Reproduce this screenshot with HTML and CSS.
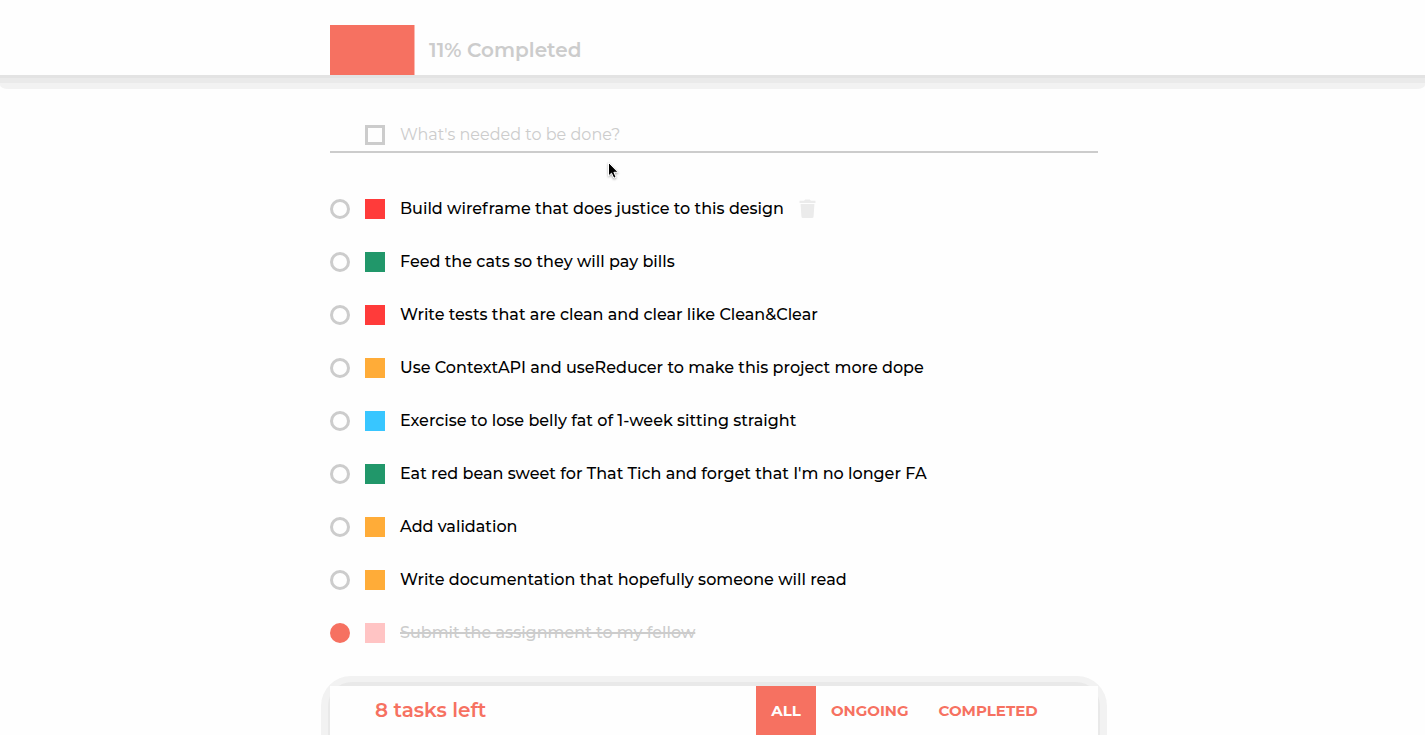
FILE: index.html
```html
<!DOCTYPE html>
<html lang="en">
<head>
<meta charset="utf-8">
<title>Todo</title>
<link rel="stylesheet" href="styles.css">
</head>
<body>
<header class="header">
  <div class="progress"><div class="progress-bar"></div><span class="progress-label">11% Completed</span></div>
</header>
<main class="main">
  <div class="new-task"><span class="priority empty"></span><span class="placeholder">What's needed to be done?</span></div>
  <ul class="tasks">
    <li class="task"><span class="check"></span><span class="priority red"></span><span class="text">Build wire<span class="loose">f</span>rame that does justice to this design</span><svg class="trash" width="18" height="20" viewBox="0 0 18 20"><path fill="#ebebeb" d="M.5 1.800H5L6.300.5h4.400L12 1.800h4.500V4H.5zM1.600 5h13.800l-.8 12.500q-.1 1.500-1.600 1.500H4q-1.500 0-1.600-1.500z"/></svg></li>
    <li class="task"><span class="check"></span><span class="priority green"></span><span class="text">Feed the cats so they will pay bills</span></li>
    <li class="task"><span class="check"></span><span class="priority red"></span><span class="text">Write tests that are clean and clear like Clean&amp;Clear</span></li>
    <li class="task"><span class="check"></span><span class="priority orange"></span><span class="text">Use ContextAPI and useReducer to make this project more dope</span></li>
    <li class="task"><span class="check"></span><span class="priority blue"></span><span class="text">Exercise to lose belly fat of 1-week sitting straight</span></li>
    <li class="task"><span class="check"></span><span class="priority green"></span><span class="text">Eat red bean sweet for That Tich and forget that I'm no longer FA</span></li>
    <li class="task"><span class="check"></span><span class="priority orange"></span><span class="text">Add validation</span></li>
    <li class="task"><span class="check"></span><span class="priority orange"></span><span class="text">Write documentation that hopefully someone will read</span></li>
    <li class="task done"><span class="check"></span><span class="priority pink"></span><span class="text">Submit the assignment to my fellow</span></li>
  </ul>
</main>
<footer class="footer">
  <div class="footer-inner">
    <span class="left">8 tasks left</span>
    <nav class="filters"><a class="filter active">ALL</a><a class="filter">ONGOING</a><a class="filter">COMPLETED</a></nav>
  </div>
</footer>
<svg class="cursor" width="14" height="20" viewBox="0 0 14 20"><path fill="#000" stroke="#fff" stroke-width="1" d="M1.500 1.500V15l3-2.800 2.300 5 2.300-1-2.200-4.900h4.200z"/></svg>
</body>
</html>
```
FILE: styles.css
```css
* { box-sizing: border-box; }
html { overflow: hidden; }
body {
  margin: 0;
  height: 735px;
  overflow: hidden;
  background: #fefefe;
  color: #000;
  font-family: Montserrat, Inter, sans-serif;
  font-size: 16px;
  display: flex;
  flex-direction: column;
}
.header { position: relative; z-index: 0; height: 75px; padding: 25px 0 0 330px; background: #fefefe; }
.header::after {
  content: "";
  position: absolute;
  z-index: -1;
  inset: 0;
  background: #fefefe;
  box-shadow: 0 3px #e3e3e3;
}
.header::before {
  content: "";
  position: absolute;
  z-index: -2;
  left: 0; right: 0; top: 75px;
  height: 14px;
  border-radius: 0 0 8px 8px / 0 0 4px 4px;
  background: linear-gradient(#eaeaea 8px, #f2f2f2 8px);
}
.progress { display: flex; align-items: center; height: 50px; }
.progress-bar { width: 85px; height: 50px; background: linear-gradient(90deg, #f67161 84px, #fbb8b0 84px); }
.progress-label { margin-left: 14px; font-size: 20px; font-weight: 600; letter-spacing: .03px; color: #ccc; white-space: nowrap; }
.main { flex: 1; width: 768px; margin-left: 330px; padding-top: 42px; }
.new-task { display: flex; align-items: center; height: 36px; border-bottom: 2px solid #ccc; padding-left: 35px; }
.placeholder { margin-left: 15px; color: #ccc; letter-spacing: .01px; }
.priority { width: 20px; height: 20px; flex: none; }
.empty { border: 3px solid #ccc; margin-top: 2px; }
.red { background: #ff3b3a; }
.green { background: #21976a; }
.orange { background: #ffac38; }
.blue { background: #38c6ff; }
.pink { background: #ffc4c4; }
.tasks { list-style: none; margin: 0; padding: 29px 0 0; }
.task { display: flex; align-items: center; height: 53px; }
.check { width: 20px; height: 20px; flex: none; border: 3px solid #ccc; border-radius: 50%; margin-right: 15px; }
.text { margin-left: 15px; font-weight: 500; white-space: nowrap; }
.loose { letter-spacing: .8px; }
.trash { margin-left: 15px; }
.done .check { border-color: #f67161; background: #f67161; }
.done .text { color: #ccc; text-decoration: line-through 2px; }
.footer { position: relative; z-index: 0; flex: none; width: 768px; height: 49px; margin-left: 330px; }
.footer::before {
  content: "";
  position: absolute;
  z-index: -2;
  inset: -10px -9px 0 -9px;
  border-radius: 30px 30px 0 0;
  background: #f2f2f2;
}
.footer::after {
  content: "";
  position: absolute;
  z-index: -1;
  inset: -4px -2px 0 -2px;
  border-radius: 24px 24px 0 0;
  background: #e9e9e9;
}
.footer-inner { display: flex; align-items: center; height: 49px; padding: 0 45px; background: #fefefe; color: #f67161; }
.left { flex: 1; height: 49px; line-height: 48px; font-size: 20px; font-weight: 600; }
.filters { display: flex; margin-right: .4px; }
.filter { height: 49px; padding: 0 15px; line-height: 49px; font-size: 15px; font-weight: 700; }
.active { background: #f67161; color: #fefefe; }
.cursor { position: absolute; left: 607px; top: 161px; filter: drop-shadow(0 1px 1px rgba(0, 0, 0, .35)); }
```
